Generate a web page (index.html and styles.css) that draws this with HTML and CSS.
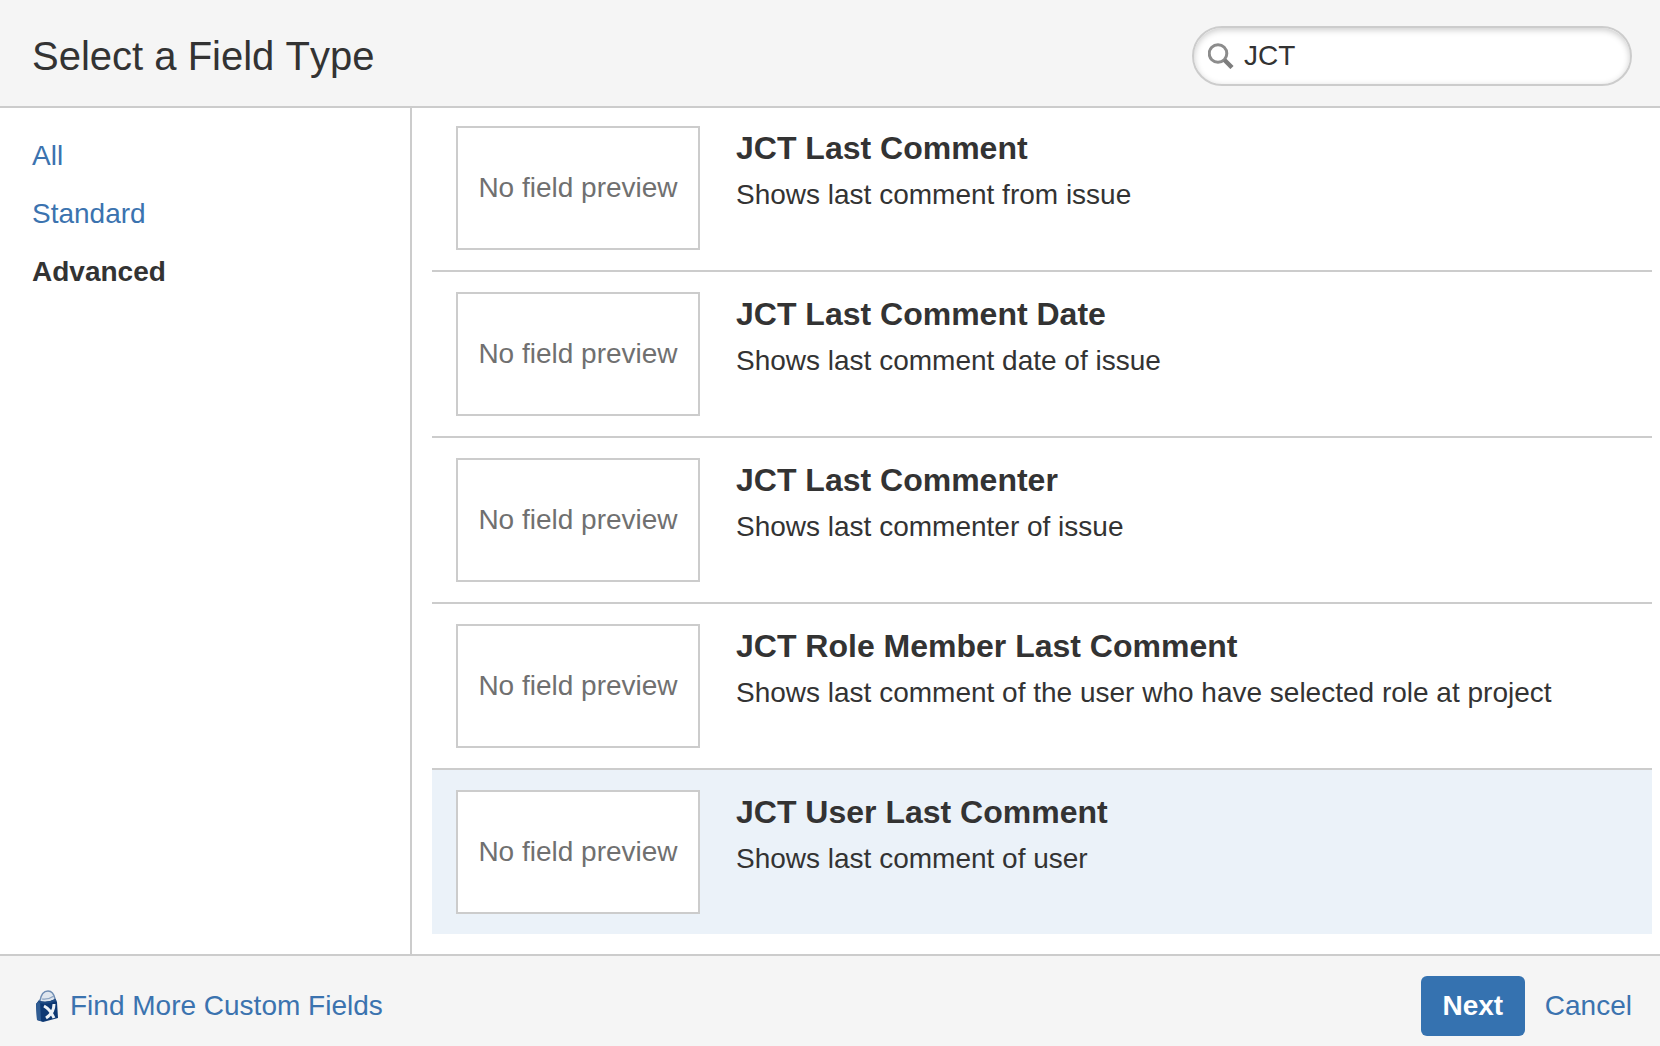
FILE: index.html
```html
<!DOCTYPE html>
<html lang="en">
<head>
<meta charset="utf-8">
<meta name="viewport" content="width=device-width, initial-scale=1">
<title>Select a Field Type</title>
<link rel="stylesheet" href="styles.css">
</head>
<body>
<header class="dialog-header">
  <h1 class="dialog-title">Select a Field Type</h1>
  <label class="search">
    <svg class="search-icon" viewBox="0 0 26 26" aria-hidden="true">
      <circle cx="10" cy="10.500" r="8.800" fill="none" stroke="#8c8c8c" stroke-width="3"/>
      <path d="M16.500 17l7.500 7.500" fill="none" stroke="#7c7c7c" stroke-width="4.500"/>
    </svg>
    <input class="search-input" type="text" value="JCT" aria-label="Search field types">
  </label>
</header>
<div class="dialog-body">
  <nav class="categories">
    <a class="category" href="#all">All</a>
    <a class="category" href="#standard">Standard</a>
    <a class="category category-active" href="#advanced" aria-current="page">Advanced</a>
  </nav>
  <main class="panel">
    <ul class="field-list">
      <li class="field">
        <div class="preview">No field preview</div>
        <div class="field-text">
          <h2 class="field-name">JCT Last Comment</h2>
          <p class="field-description">Shows last comment from issue</p>
        </div>
      </li>
      <li class="field">
        <div class="preview">No field preview</div>
        <div class="field-text">
          <h2 class="field-name">JCT Last Comment Date</h2>
          <p class="field-description">Shows last comment date of issue</p>
        </div>
      </li>
      <li class="field">
        <div class="preview">No field preview</div>
        <div class="field-text">
          <h2 class="field-name">JCT Last Commenter</h2>
          <p class="field-description">Shows last commenter of issue</p>
        </div>
      </li>
      <li class="field">
        <div class="preview">No field preview</div>
        <div class="field-text">
          <h2 class="field-name">JCT Role Member Last Comment</h2>
          <p class="field-description">Shows last comment of the user who have selected role at project</p>
        </div>
      </li>
      <li class="field field-selected">
        <div class="preview">No field preview</div>
        <div class="field-text">
          <h2 class="field-name">JCT User Last Comment</h2>
          <p class="field-description">Shows last comment of user</p>
        </div>
      </li>
    </ul>
  </main>
</div>
<footer class="dialog-footer">
  <a class="marketplace" href="#marketplace">
    <svg class="bag-icon" viewBox="0 0 22 32" aria-hidden="true">
      <path d="M3 10L5 9L19 8L21 12L22 28L7 32L1 30L0 14Z" fill="#0d3873"/>
      <path d="M0 14L4 10L5 31L1 30Z" fill="#2f5c93"/>
      <path d="M4 11C5 4 8 1 12 1S18 4 19 9Q12 13 4 11Z" fill="#dfe6ee"/>
      <path d="M4 11C5 4 8 1 12 1S18 4 19 9" fill="none" stroke="#6f8db3" stroke-width="1.500"/>
      <path d="M6 9Q12 10 18 6" fill="none" stroke="#8aa2c0" stroke-width="1.200"/>
      <path d="M3 12Q12 14 20 10" fill="none" stroke="#1e4a82" stroke-width="2"/>
      <path d="M8 16Q14 19 18 28M18 14Q18 23 10 28" fill="none" stroke="#edf2f7" stroke-width="3"/>
    </svg>
    Find More Custom Fields
  </a>
  <div class="actions">
    <button class="next" type="button">Next</button>
    <a class="cancel" href="#cancel">Cancel</a>
  </div>
</footer>
</body>
</html>
```
FILE: styles.css
```css
* {
  box-sizing: border-box;
}

body {
  display: flex;
  flex-direction: column;
  min-height: 100vh;
  margin: 0;
  background: #fff;
  color: #333;
  font: 28px/40px "Liberation Sans", Arial, sans-serif;
}

h1, h2, p, ul {
  margin: 0;
  padding: 0;
}

a {
  color: #3b73af;
  text-decoration: none;
}

.dialog-header {
  display: flex;
  align-items: center;
  justify-content: space-between;
  gap: 32px;
  padding: 26px 28px 20px 32px;
  background: #f5f5f5;
  border-bottom: 2px solid #ccc;
}

.dialog-title {
  font-size: 40px;
  font-weight: 400;
  font-kerning: none;
}

.search {
  display: flex;
  align-items: center;
  gap: 10px;
  width: 440px;
  height: 60px;
  padding: 0 14px;
  background: #fff;
  border: 2px solid #ccc;
  border-radius: 30px;
  box-shadow: inset 0 2px 6px #ccc;
}

.search-icon {
  flex: none;
  width: 26px;
  height: 26px;
}

.search-input {
  flex: 1;
  min-width: 0;
  padding: 0;
  background: transparent;
  border: 0;
  outline: 0;
  color: inherit;
  font: inherit;
}

.dialog-body {
  display: flex;
  flex: 1;
}

.categories {
  display: flex;
  flex: none;
  flex-direction: column;
  gap: 18px;
  width: 412px;
  padding: 28px 32px;
  border-right: 2px solid #ccc;
}

.category-active {
  color: #333;
  font-weight: 700;
}

.panel {
  flex: 1;
  min-width: 0;
  padding: 0 8px 20px 20px;
}

.field-list {
  list-style: none;
}

.field {
  display: flex;
  gap: 36px;
  padding: 20px 24px;
  border-top: 2px solid #ccc;
}

.field:first-child {
  padding-top: 18px;
  border-top: 0;
}

.field-selected {
  background: #ebf2f9;
}

.preview {
  display: flex;
  flex: none;
  align-items: center;
  justify-content: center;
  width: 244px;
  height: 124px;
  background: #fff;
  border: 2px solid #ccc;
  color: #707070;
}

.field-name {
  font-size: 32px;
  line-height: 44px;
}

.field-description {
  line-height: 50px;
}

.dialog-footer {
  display: flex;
  align-items: center;
  justify-content: space-between;
  padding: 20px 28px 10px 36px;
  background: #f5f5f5;
  border-top: 2px solid #ccc;
}

.marketplace {
  display: flex;
  align-items: center;
  gap: 12px;
}

.bag-icon {
  width: 22px;
  height: 32px;
}

.actions {
  display: flex;
  align-items: center;
  gap: 20px;
}

.next {
  min-width: 104px;
  height: 60px;
  padding: 0 20px;
  background: #3572b0;
  border: 0;
  border-radius: 6px;
  color: #fff;
  font: inherit;
  font-weight: 700;
}
```
